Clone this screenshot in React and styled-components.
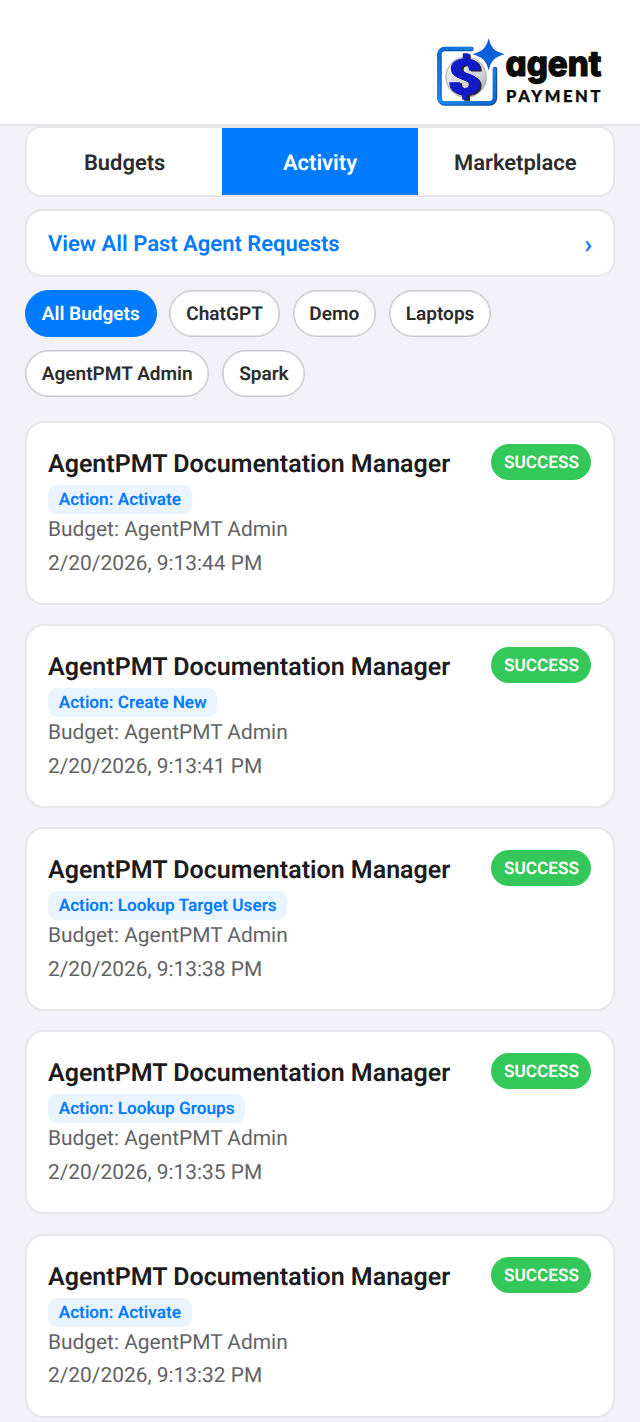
import {useState} from 'react'
import styled, { createGlobalStyle } from 'styled-components'

const tabs=['Budgets','Activity','Marketplace']
const budgets=['All Budgets','ChatGPT','Demo','Laptops','AgentPMT Admin','Spark']
const activities=[
  {action:'Activate',time:'2/20/2026, 9:13:44 PM'},
  {action:'Create New',time:'2/20/2026, 9:13:41 PM'},
  {action:'Lookup Target Users',time:'2/20/2026, 9:13:38 PM'},
  {action:'Lookup Groups',time:'2/20/2026, 9:13:35 PM'},
  {action:'Activate',time:'2/20/2026, 9:13:32 PM'},
]

const Logo = () => (
  <LogoSvg width="172" height="84" viewBox="434 36 172 84" role="img" aria-label="agent payment">
    <defs>
      <linearGradient id="frame" x1="0" y1="0" x2="1" y2="1">
        <stop offset="0" stopColor="#0b6ad0" />
        <stop offset="0.5" stopColor="#1c8bf0" />
        <stop offset="1" stopColor="#0a66d0" />
      </linearGradient>
      <linearGradient id="coin" x1="0" y1="0" x2="1" y2="1">
        <stop offset="0" stopColor="#f4f4f4" />
        <stop offset="0.7" stopColor="#cfcfd1" />
        <stop offset="1" stopColor="#8e8e92" />
      </linearGradient>
    </defs>
    <path d="M471.500 49H445a5.500 5.500 0 0 0-5.500 5.500V98a5.500 5.500 0 0 0 5.500 5.500h44.500a5.500 5.500 0 0 0 5.500-5.500V69" fill="none" stroke="#0a4aa0" strokeWidth="4.400" strokeLinecap="round" />
    <path d="M471.500 48.600H445a6 6 0 0 0-6 6V97.500a5.500 5.500 0 0 0 5.500 5.500h44.500a5.500 5.500 0 0 0 5.500-5.500V69" fill="none" stroke="url(#frame)" strokeWidth="3.400" strokeLinecap="round" />
    <circle cx="466" cy="77" r="21" fill="url(#coin)" />
    <circle cx="466" cy="77" r="20" fill="none" stroke="#b4b4b8" strokeWidth="1" />
    <g fontFamily="Roboto, sans-serif" fontWeight="900" fontSize="49">
      <text x="449.500" y="94.500" textLength="34" lengthAdjust="spacingAndGlyphs" fill="#20242c" stroke="#20242c" strokeWidth="1">$</text>
      <text x="447.500" y="93.500" textLength="34" lengthAdjust="spacingAndGlyphs" fill="#131bc9" stroke="#131bc9" strokeWidth="1">$</text>
    </g>
    <path d="M488.700 38c2.200 9.500 5.600 13.500 16 16.200-10.400 2.800-13.800 6.700-16 16.300-2.300-9.600-6-13.500-16.300-16.300 10.300-2.700 14-6.700 16.300-16.200z" fill="#0a60d6" />
    <Brand x="505.500" y="76" textLength="96" lengthAdjust="spacingAndGlyphs">agent</Brand>
    <Sub x="506" y="102" textLength="94.500" lengthAdjust="spacing">PAYMENT</Sub>
  </LogoSvg>
)

const App = () => {
  const [tab,setTab]=useState('Activity')
  const [budget,setBudget]=useState('All Budgets')
  return (
    <Page>
      <GlobalStyle />
      <Header>
        <Logo />
      </Header>
      <Content>
        <Tabs>
          {tabs.map((t)=>(
            <Tab key={t} $active={t===tab} onClick={()=>setTab(t)}>{t}</Tab>
          ))}
        </Tabs>
        <PastRequests>
          <span>View All Past Agent Requests</span>
          <Chevron>›</Chevron>
        </PastRequests>
        <Chips>
          {budgets.map((b)=>(
            <Chip key={b} $active={b===budget} onClick={()=>setBudget(b)}>{b}</Chip>
          ))}
        </Chips>
        <List>
          {activities.map((a)=>(
            <Card key={a.time}>
              <CardTop>
                <Title>AgentPMT Documentation Manager</Title>
                <Status>SUCCESS</Status>
              </CardTop>
              <Action>Action: {a.action}</Action>
              <Meta>Budget: AgentPMT Admin</Meta>
              <Meta>{a.time}</Meta>
            </Card>
          ))}
        </List>
      </Content>
    </Page>
  )
}

const GlobalStyle = createGlobalStyle`
  * {
    box-sizing: border-box;
  }
  body {
    margin: 0;
    background: #f2f1f7;
    font-family: Roboto, sans-serif;
    text-rendering: geometricPrecision;
  }
`

const Page = styled.div`
  height: 1422px;
  overflow: hidden;
  background: #f2f1f7;
`

const Header = styled.header`
  display: flex;
  justify-content: flex-end;
  height: 126px;
  padding: 36px 34px 0 0;
  background: #fff;
  border-bottom: 2px solid #e6e6e8;
`

const LogoSvg = styled.svg`
  flex: none;
  overflow: visible;
`

const Brand = styled.text`
  font-family: Inter, sans-serif;
  font-size: 35px;
  font-weight: 800;
  font-feature-settings: "cv11";
  fill: #0b0b0b;
  stroke: #0b0b0b;
  stroke-width: 1.2px;
`

const Sub = styled.text`
  font-family: Lato, sans-serif;
  font-size: 16.5px;
  font-weight: 900;
  fill: #0b0b0b;
  stroke: #0b0b0b;
  stroke-width: 0.3px;
`

const Content = styled.main`
  padding: 0 25px;
`

const Tabs = styled.nav`
  display: flex;
  height: 70.6px;
  border: 2px solid #e7e7eb;
  border-radius: 17px;
  background: #fff;
  overflow: hidden;
`

const Tab = styled.button`
  flex: 1;
  padding: 5px 0 0;
  border: none;
  background: ${(p) => (p.$active ? '#007aff' : '#fff')};
  color: ${(p) => (p.$active ? '#fff' : '#2c2c2e')};
  font-family: inherit;
  font-size: 21.95px;
  font-weight: 600;
  text-rendering: inherit;
`

const PastRequests = styled.div`
  display: flex;
  justify-content: space-between;
  align-items: center;
  height: 68px;
  margin-top: 12.4px;
  padding: 4px 21px 0;
  border: 2px solid #e7e7eb;
  border-radius: 17px;
  background: #fff;
  color: #007aff;
  font-size: 22px;
  font-weight: 600;
`

const Chevron = styled.span`
  font-size: 26px;
`

const Chips = styled.div`
  display: flex;
  flex-wrap: wrap;
  gap: 13px 12.9px;
  margin-top: 13px;
`

const Chip = styled.button`
  height: 47px;
  padding: 0 15.8px;
  border: 1px solid ${(p) => (p.$active ? '#007aff' : '#c7c7cc')};
  border-radius: 24px;
  background: ${(p) => (p.$active ? '#007aff' : '#fff')};
  box-shadow: inset 0 0 0 0.6px ${(p) => (p.$active ? '#007aff' : '#c7c7cc')};
  color: ${(p) => (p.$active ? '#fff' : '#2c2c2e')};
  font-family: inherit;
  font-size: 19.05px;
  font-weight: 600;
  text-rendering: inherit;
`

const List = styled.div`
  display: flex;
  flex-direction: column;
  gap: 19.15px;
  margin-top: 24px;
`

const Card = styled.article`
  display: flex;
  flex-direction: column;
  align-items: flex-start;
  height: 184px;
  padding: 21px 21.6px 0 21px;
  border: 2px solid #e7e7eb;
  border-radius: 19px;
  background: #fff;
`

const CardTop = styled.div`
  display: flex;
  justify-content: space-between;
  width: 100%;
  height: 41px;
`

const Title = styled.h2`
  margin: 5px 0 0;
  color: #1c1c1e;
  font-size: 25px;
  font-weight: 600;
  line-height: 32px;
`

const Status = styled.span`
  height: 36px;
  padding: 0 12.5px;
  border-radius: 18px;
  background: #34c759;
  color: #fff;
  font-size: 17.2px;
  font-weight: 600;
  line-height: 38px;
`

const Action = styled.span`
  height: 29px;
  padding: 0 10.7px;
  border-radius: 9px;
  background: #eaf4ff;
  color: #007aff;
  font-size: 17.2px;
  font-weight: 600;
  line-height: 31.6px;
`

const Meta = styled.p`
  margin: 0;
  color: #636366;
  font-size: 20.9px;
  line-height: 33.7px;
`

export default App
